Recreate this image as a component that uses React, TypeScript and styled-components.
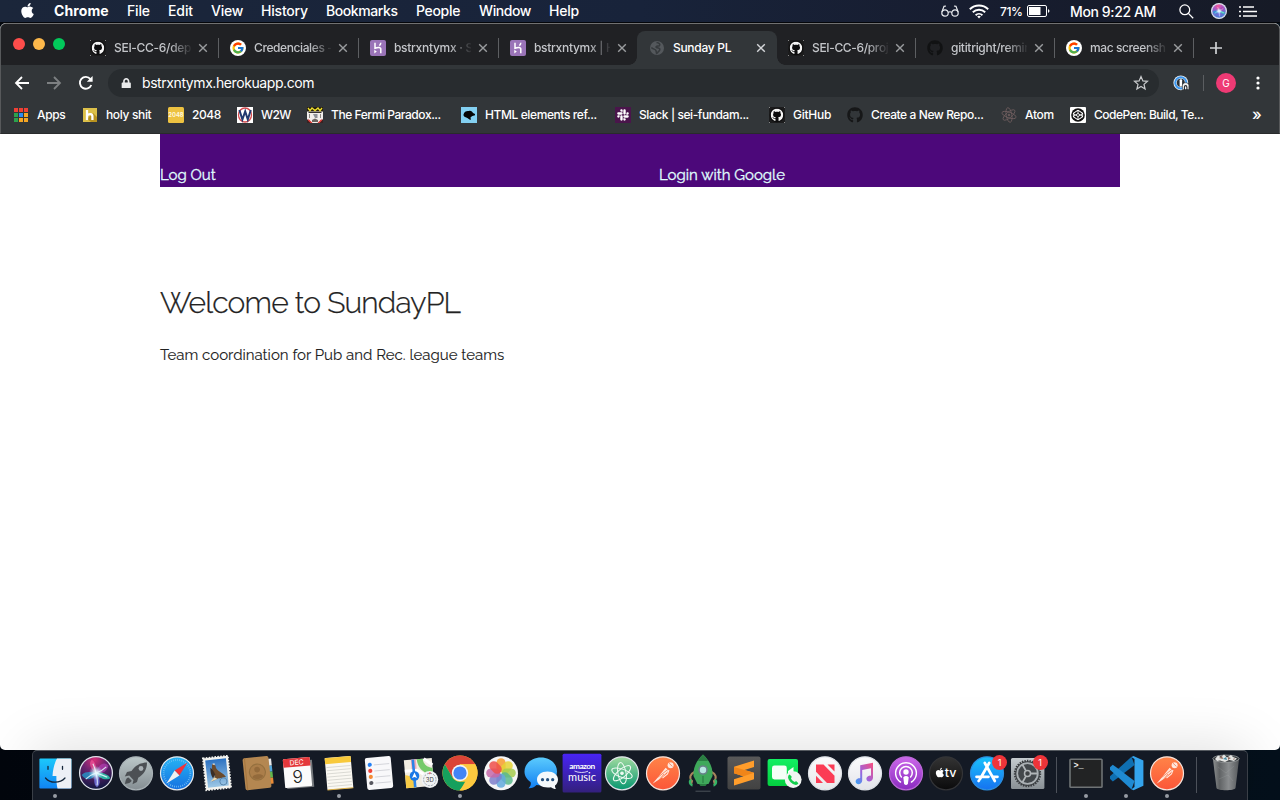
import React from 'react';
import styled, { createGlobalStyle, css } from 'styled-components';
import { FaApple, FaGithub, FaSlack, FaCodepen, FaLock } from 'react-icons/fa';
import { FcGoogle } from 'react-icons/fc';

const Global = createGlobalStyle`
  *, *::before, *::after { box-sizing: border-box; }
  html, body { margin: 0; padding: 0; overflow: hidden; background: #03070f; }
  svg { display: block; flex: none; }
`;

const UI = `Inter, "Liberation Sans", sans-serif`;
const PAGE = `Raleway, Lato, "Open Sans", sans-serif`;

const Desktop = styled.div`
  width: 1280px;
  height: 800px;
  display: flex;
  flex-direction: column;
  overflow: hidden;
  font-family: ${UI};
  background: linear-gradient(90deg, #02060d 0%, #050b15 50%, #04101b 100%);
`;

/* ---------- menu bar ---------- */
const MenuBar = styled.header`
  height: 23px;
  flex: none;
  display: flex;
  align-items: center;
  padding: 0 23px 0 19px;
  background: linear-gradient(90deg, #1b263a 0%, #18233a 50%, #171d30 75%, #161a26 100%);
  border-bottom: 1px solid #04060a;
  color: #fff;
`;
const MenuApple = styled.div`
  width: 35px;
  display: flex;
  padding-bottom: 1px;
`;
const MenuItem = styled.span<{ $w: number; $strong?: boolean; $ls: number }>`
  width: ${p => p.$w}px;
  flex: none;
  white-space: nowrap;
  font-size: 14px;
  line-height: 22px;
  font-weight: ${p => (p.$strong ? 700 : 500)};
  letter-spacing: ${p => p.$ls}px;
`;
const MenuStatus = styled.div`
  margin-left: auto;
  display: flex;
  align-items: center;
`;
const StatusText = styled.span<{ $w: number; $size: number; $ls: number }>`
  width: ${p => p.$w}px;
  white-space: nowrap;
  font-size: ${p => p.$size}px;
  font-weight: 500;
  letter-spacing: ${p => p.$ls}px;
`;
const StatusIcon = styled.div<{ $w: number }>`
  width: ${p => p.$w}px;
  display: flex;
`;

/* ---------- browser window ---------- */
const Window = styled.main`
  height: 727px;
  flex: none;
  display: flex;
  flex-direction: column;
  overflow: hidden;
  border-radius: 6px 6px 5px 5px;
  background: #fff;
`;
const Chrome = styled.div`
  height: 111px;
  flex: none;
  display: flex;
  flex-direction: column;
  background: #323639;
  border-radius: 6px 6px 0 0;
  border: 1px solid #57595b;
  border-top-color: #717171;
  border-bottom-color: #292b2c;
`;
const TabStrip = styled.div`
  height: 41px;
  flex: none;
  display: flex;
  align-items: flex-end;
  background: #202124;
  border-radius: 5px 5px 0 0;
`;
const Lights = styled.div`
  width: 78px;
  height: 41px;
  display: flex;
  gap: 8px;
  padding: 14px 0 0 12px;
`;
const Light = styled.i<{ $c: string }>`
  width: 12px;
  height: 12px;
  border-radius: 50%;
  background: ${p => p.$c};
`;
const Tab = styled.div<{ $w: number; $active?: boolean; $line?: boolean }>`
  position: relative;
  width: ${p => p.$w}px;
  height: 34px;
  flex: none;
  display: flex;
  align-items: center;
  padding-left: ${p => (p.$active ? 12 : 11)}px;
  border-radius: 8px 8px 0 0;
  color: ${p => (p.$active ? '#fff' : '#c3c5c9')};
  background: ${p => (p.$active ? '#323639' : 'transparent')};
  ${p => p.$line && css`
    &::after {
      content: '';
      position: absolute;
      right: 0;
      top: 7px;
      width: 1px;
      height: 20px;
      background: #5d5f62;
    }
  `}
  ${p => p.$active && css`
    &::before, &::after {
      content: '';
      position: absolute;
      bottom: 0;
      width: 8px;
      height: 8px;
    }
    &::before { left: -8px; background: radial-gradient(circle at 0 0, transparent 7.5px, #323639 8px); }
    &::after { right: -8px; background: radial-gradient(circle at 100% 0, transparent 7.5px, #323639 8px); }
  `}
`;
const Favicon = styled.span`
  width: 16px;
  height: 16px;
  margin-right: 8px;
  flex: none;
  display: flex;
  align-items: center;
  justify-content: center;
`;
const TabTitle = styled.span<{ $w: number; $ls: number; $fade?: boolean }>`
  width: ${p => p.$w}px;
  margin-right: 7px;
  white-space: nowrap;
  font-size: 12px;
  font-weight: 450;
  line-height: 18px;
  letter-spacing: ${p => p.$ls}px;
  ${p => p.$fade && css`
    mask-image: linear-gradient(90deg, #000 72%, rgba(0, 0, 0, 0.08) 100%);
  `}
`;
const Toolbar = styled.div`
  height: 36px;
  flex: none;
  display: flex;
  align-items: center;
  padding-left: 13px;
`;
const NavIcon = styled.div<{ $w: number }>`
  width: ${p => p.$w}px;
  flex: none;
  display: flex;
`;
const AddressBar = styled.div`
  width: 1051px;
  height: 28px;
  flex: none;
  display: flex;
  align-items: center;
  padding: 0 10px 0 13px;
  border-radius: 14px;
  background: #282c2f;
  color: #fff;
  font-size: 14px;
  font-weight: 400;
  letter-spacing: -0.42px;
`;
const Url = styled.span`
  flex: 1;
  margin-left: 10.5px;
  padding-bottom: 1px;
`;
const ToolDivider = styled.i`
  width: 1px;
  height: 16px;
  background: #5b5e61;
`;
const Avatar = styled.div`
  width: 20px;
  height: 20px;
  margin: 0 20px 0 12px;
  border-radius: 50%;
  background: #ee3a74;
  color: #fff;
  font-size: 10px;
  line-height: 20px;
  text-align: center;
`;
const Bookmarks = styled.nav`
  height: 32px;
  flex: none;
  display: flex;
  align-items: center;
  padding: 0 0 4px 12px;
  color: #fff;
  font-size: 12px;
  font-weight: 450;
`;
const Bookmark = styled.div<{ $w: number }>`
  width: ${p => p.$w}px;
  flex: none;
  display: flex;
  align-items: center;
  white-space: nowrap;
`;
const BookmarkLabel = styled.span<{ $ls: number }>`
  padding-bottom: 2px;
  letter-spacing: ${p => p.$ls}px;
`;
const More = styled.span`
  margin-left: 24px;
  font-size: 16px;
  line-height: 16px;
  padding-bottom: 3px;
`;

/* ---------- web page ---------- */
const Page = styled.section`
  flex: 1;
  width: 960px;
  margin: 0 auto;
  font-family: ${PAGE};
  color: #222;
`;
const SiteNav = styled.div`
  height: 53px;
  display: flex;
  align-items: flex-end;
  background: #4c087a;
  color: #e0ffff;
  font-size: 15px;
  line-height: 24px;
`;
const SiteLink = styled.a<{ $w: number }>`
  width: ${p => p.$w}px;
  -webkit-text-stroke: 0.3px #e0ffff;
`;
const Heading = styled.h1`
  margin: 96px 0 0;
  font-size: 30px;
  font-weight: 300;
  line-height: 40px;
  letter-spacing: -0.8px;
  -webkit-text-stroke: 0.25px #222;
`;
const Lead = styled.p`
  margin: 20px 0 0;
  font-size: 15px;
  line-height: 24px;
  -webkit-text-stroke: 0.1px #222;
`;

/* ---------- dock ---------- */
const DockArea = styled.footer`
  position: relative;
  height: 50px;
  flex: none;
  display: flex;
  padding-left: 32px;
`;
const Dock = styled.div`
  width: 1216px;
  height: 50px;
  display: flex;
  padding: 2px 0 0 2px;
  background: #141a25;
  border: 1px solid #3a3f47;
  border-top-color: #555a60;
  border-bottom: 0;
  border-radius: 5px 5px 0 0;
  box-shadow: 0 0 56px rgba(0, 0, 0, 0.15);
`;
const DockCell = styled.div`
  position: relative;
  width: 40.5px;
  height: 46px;
  flex: none;
  display: flex;
  flex-direction: column;
  align-items: center;
`;
const Running = styled.i`
  width: 4px;
  height: 4px;
  margin-top: 1px;
  border-radius: 50%;
  background: #979ba3;
`;
const DockSeparator = styled.i`
  width: 1px;
  height: 36px;
  margin: 4px 8.6px 0;
  flex: none;
  background: #4c515a;
`;
const Badge = styled.b`
  position: absolute;
  top: 1.5px;
  right: 0;
  width: 15px;
  height: 15px;
  border-radius: 50%;
  background: #ee3439;
  color: #fff;
  font-size: 9px;
  font-weight: 400;
  line-height: 15px;
  text-align: center;
`;

/* ---------- small drawings ---------- */
const GithubBox = () => (
  <svg width="16" height="16" viewBox="0 0 16 16">
    <rect width="16" height="16" fill="#1b1b1c" />
    <path d="M0 1V0H1M15 0H16V1M16 15V16H15M1 16H0V15" stroke="#aaa" fill="none" />
    <circle cx="8" cy="8" r="7.3" fill="#0c0c0d" />
    <g transform="translate(1.6 1.6)"><FaGithub size={12.8} color="#f4f4f4" /></g>
  </svg>
);
const HerokuIcon = () => (
  <svg width="16" height="16" viewBox="0 0 16 16">
    <rect width="16" height="16" rx="2" fill="#9a74b8" />
    <path d="M5 2.8V8.2C7.4 7.2 10.8 6.8 10.8 9V13.2M10.8 2.8C10.8 4 10.2 4.9 9.4 5.6" fill="none" stroke="#fff" strokeWidth="1.5" />
    <path d="M4.3 9.8L6.8 11.6L4.3 13.4Z" fill="#fff" />
  </svg>
);
const GoogleIcon = () => (
  <svg width="16" height="16" viewBox="0 0 16 16">
    <circle cx="8" cy="8" r="8" fill="#fff" />
    <g transform="translate(1.4 1.4)"><FcGoogle size={13.2} /></g>
  </svg>
);
const GlobeIcon = () => (
  <svg width="14" height="14" viewBox="0 0 14 14">
    <circle cx="7" cy="7" r="7" fill="#54585c" />
    <path d="M6.5 1.6C9 2 10.4 3 9.6 4.4C8.6 5.6 7.2 4.6 6.2 5.6C5.6 6.6 7.4 6.8 9 7.2C10.6 7.8 9.8 9.6 8.4 10.6C7.6 11.4 7.4 12.2 6.6 12.4C6 11 6.6 9.8 5.4 8.8C4 8 2.4 7.6 1.4 6.4" fill="none" stroke="#363a3d" strokeWidth="1.5" />
  </svg>
);
const CloseIcon = ({ active }: { active?: boolean }) => (
  <svg width="10" height="10" viewBox="0 0 10 10">
    <path d="M1.2 1.2L8.8 8.8M8.8 1.2L1.2 8.8" stroke={active ? '#d4d6d9' : '#9a9c9f'} strokeWidth="1.4" />
  </svg>
);
const AppsIcon = () => {
  const colors = ['#ee4035', '#ee4035', '#ee4035', '#2ba24c', '#2c8cf4', '#f5a623', '#2ba24c', '#f5a623', '#f5a623'];
  return (
    <svg width="14" height="14" viewBox="0 0 14 14">
      {colors.map((c, i) => <rect key={i} x={(i % 3) * 5} y={Math.floor(i / 3) * 5} width="4" height="4" fill={c} />)}
    </svg>
  );
};
const HolyIcon = () => (
  <svg width="14" height="14" viewBox="0 0 14 14">
    <rect width="14" height="14" fill="#dcc04a" />
    <path d="M10 5L14 9V14H8L4 11Z" fill="#b8921f" />
    <path d="M4 2V12M4 7.4C6 5.4 9.4 5.8 9.4 8.2V12" stroke="#fff" strokeWidth="2.3" fill="none" />
  </svg>
);
const TwoIcon = () => (
  <svg width="16" height="16" viewBox="0 0 16 16">
    <rect width="16" height="16" rx="1.5" fill="#edc241" />
    <text x="8" y="10.3" fontSize="5.8" fontWeight="700" fill="#fff7dc" textAnchor="middle" fontFamily="Inter, sans-serif">2048</text>
  </svg>
);
const W2WIcon = () => (
  <svg width="16" height="16" viewBox="0 0 16 16">
    <rect width="16" height="16" fill="#fff" />
    <ellipse cx="8" cy="8" rx="6.5" ry="7" fill="none" stroke="#d6494c" strokeWidth="1.3" />
    <path d="M2.4 3L5.4 12.5L8.2 4.5L10.8 12.5L13.8 3" fill="none" stroke="#22386f" strokeWidth="2" />
  </svg>
);
const FermiIcon = () => (
  <svg width="16" height="16" viewBox="0 0 16 16">
    <rect width="16" height="16" fill="#f1efec" />
    <path d="M0 0H16V4.6H0Z" fill="#272010" />
    <path d="M1 1L3 3.6L5 1L8 3.6L11 1L13 3.6L15 1" stroke="#efe02e" strokeWidth="1.3" fill="none" />
    <path d="M1.5 5.5H14.5" stroke="#34302d" strokeWidth="1" />
    <path d="M2.5 7V11M13.5 7V11" stroke="#8a8580" strokeWidth="1" />
    <path d="M5 13L8 11.4L11 13V15H5Z" fill="#6b6560" />
    <path d="M6 7H10.5V11H8Z" fill="#8d9298" />
    <path d="M0 12L4 16H0ZM16 12L12 16H16Z" fill="#3a2222" /><path d="M1.5 12L5.5 16H3.5L1 13.5ZM14.5 12L10.5 16H12.5L15 13.5Z" fill="#dc2e2c" />
  </svg>
);
const MdnIcon = () => (
  <svg width="16" height="16" viewBox="0 0 16 16">
    <rect width="16" height="16" fill="#83d0f2" />
    <path d="M2.5 7.5C3 4.5 6 3.5 8 4C9.5 3.2 11.5 4.5 12 6L14 7V8.2L11.4 9L9.6 10.2L9.8 13C7.8 12.4 7 10.8 5.2 10.4C3.6 10.2 2.4 9.2 2.5 7.5Z" fill="#050505" />
  </svg>
);
const SlackIcon = () => (
  <svg width="16" height="16" viewBox="0 0 16 16">
    <rect width="16" height="16" fill="#4a154b" />
    <g transform="translate(1.4 1.4)"><FaSlack size={13.2} color="#fff" /></g>
  </svg>
);
const AtomLines = ({ c, w = 0.9 }: { c: string; w?: number }) => (
  <g fill="none" stroke={c} strokeWidth={w}>
    <ellipse cx="8" cy="8" rx="2.8" ry="7.4" transform="rotate(-10 8 8)" />
    <ellipse cx="8" cy="8" rx="2.8" ry="7.4" transform="rotate(50 8 8)" />
    <ellipse cx="8" cy="8" rx="2.8" ry="7.4" transform="rotate(110 8 8)" />
    <circle cx="8" cy="8" r="0.9" fill={c} />
  </g>
);
const AtomIcon = () => <svg width="16" height="16" viewBox="0 0 16 16"><AtomLines c="#6c5c5d" /></svg>;
const CodepenIcon = () => (
  <svg width="16" height="16" viewBox="0 0 16 16">
    <rect width="16" height="16" rx="1" fill="#fff" />
    <circle cx="8" cy="8" r="6.8" fill="#111" />
    <g transform="translate(2.7 2.7)"><FaCodepen size={10.6} color="#fff" /></g>
  </svg>
);
const SiriOrb = ({ id, r, light }: { id: string; r: number; light?: boolean }) => (
  <g>
    <defs>
      <radialGradient id={`${id}a`} cx="45%" cy="10%" r="90%">
        <stop offset="0" stopColor={light ? '#f0569c' : '#d52f78'} />
        <stop offset=".4" stopColor={light ? '#a45ac8' : '#6d2370'} />
        <stop offset="1" stopColor={light ? '#3f7fd8' : '#0d1740'} />
      </radialGradient>
      <radialGradient id={`${id}b`}>
        <stop offset="0" stopColor="#fff" /><stop offset=".4" stopColor="#d9f6ff" stopOpacity=".75" /><stop offset="1" stopColor="#aef" stopOpacity="0" />
      </radialGradient>
    </defs>
    <circle cx="20" cy="20" r={r} fill={`url(#${id}a)`} stroke="#dfe2ea" strokeWidth="1.3" />
    <g transform={`translate(20 20) scale(${r / 16})`}>
      <path d="M-14 2C-9 -3 -3 0 0 0C-2 6 -9 9 -14 2Z" fill="#1ea8d8" opacity=".7" />
      <path d="M0 0C2 -8 8 -12 12 -7C11 -1 5 1 0 0Z" fill="#b23fb4" opacity=".7" />
      <path d="M0 0C-5 -4 -8 -9 -4 -13C0 -10 1 -5 0 0Z" fill="#f2569a" opacity=".7" />
      <path d="M0 0C5 -1 12 1 14 5C9 8 3 5 0 0Z" fill="#28d4b4" opacity=".8" />
      <path d="M0 0C4 5 5 11 1 14C-3 11 -2 4 0 0Z" fill="#7b7ff0" opacity=".75" />
      <circle r="7" fill={`url(#${id}b)`} />
      <path d="M-10 6C-6 2 -3 1 0 0C-1 -4 -2 -7 -3 -9M0 0C3 -1 7 -3 10 -6M0 0C4 1 8 3 11 4M0 0C1 4 2 8 1 12" fill="none" stroke="#e9fbff" strokeWidth="1.1" opacity=".85" />
    </g>
  </g>
);

/* ---------- dock icons, each on a 40 x 40 canvas ---------- */
const Icon = ({ children }: { children: React.ReactNode }) => (
  <svg width="40" height="40" viewBox="0 0 40 40">{children}</svg>
);
const Grad = ({ id, a, b }: { id: string; a: string; b: string }) => (
  <defs><linearGradient id={id} x1="0" y1="0" x2="0" y2="1"><stop offset="0" stopColor={a} /><stop offset="1" stopColor={b} /></linearGradient></defs>
);
const Disc = ({ id, a, b, edge = '#dfe3e8' }: { id: string; a: string; b: string; edge?: string }) => (
  <><Grad id={id} a={a} b={b} /><circle cx="20" cy="20.3" r="16.5" fill={`url(#${id})`} stroke={edge} strokeWidth="1.2" /></>
);

const Finder = () => (
  <Icon>
    <Grad id="fi" a="#1cc8fb" b="#1184f4" />
    <rect x="4.4" y="5.6" width="32" height="30" rx="1" fill="url(#fi)" />
    <path d="M22 5.6H35.4Q36.4 5.6 36.4 6.6V34.6Q36.4 35.6 35.4 35.6H22.5C21.5 31 21.3 27 21.4 23H17.5C18 16 19.5 10 22 5.6Z" fill="#edf0f6" />
    <path d="M13 13.3V16.3M27.5 13.3V16.3" stroke="#16263a" strokeWidth="1.3" strokeLinecap="round" />
    <path d="M10.5 25C15 30.6 25 30.6 30 25" stroke="#16263a" strokeWidth="1.2" fill="none" strokeLinecap="round" />
  </Icon>
);
const Siri = () => <Icon><SiriOrb id="si" r={16.4} /></Icon>;
const Launchpad = () => (
  <Icon>
    <Disc id="la" a="#bcc8c9" b="#858e93" edge="#a9b2b6" />
    <path d="M31 9.5C24 9.5 19 13 15.5 18L11 19L8.8 23.5L13.2 22.5L17.5 27L16.5 31.2L21 29L22.2 24.8C27.5 21.5 31 17 31 9.5Z" fill="#4c5054" />
    <circle cx="25" cy="15.5" r="2.4" fill="#a8b0b4" />
    <path d="M12.5 24.5C9.8 25 9.5 28 9 31C12 30.6 15 30.2 15.6 27.6Z" fill="#4c5054" />
  </Icon>
);
const Safari = () => (
  <Icon>
    <Disc id="sa" a="#25b4f5" b="#1670e0" edge="#e6e9ec" />
    <circle cx="20" cy="20.3" r="13.4" fill="none" stroke="#7cc6f6" strokeWidth="1.8" strokeDasharray=".7 1.4" />
    <path d="M30.5 9.5L22.4 22.4L17.6 17.6Z" fill="#f2323a" />
    <path d="M9.5 30.5L22.4 22.4L17.6 17.6Z" fill="#f0eff0" />
  </Icon>
);
const Mail = () => (
  <Icon>
    <Grad id="ma" a="#2c72c2" b="#9cc7e5" />
    <g transform="rotate(-6 20 20)">
      <rect x="7.5" y="4" width="25" height="32" fill="#f3f3ef" stroke="#f3f3ef" strokeDasharray="1.6 1.3" strokeWidth="1.8" />
      <rect x="9.6" y="6.3" width="20.8" height="27.4" fill="url(#ma)" />
      <path d="M16 11C18 10 19.5 12 19.5 15C21 19 27 21 28.5 25C25 24.5 24 26 21 25.5L14 28L17.5 23C15.5 20 15 15 16 11Z" fill="#6b4a2c" />
      <path d="M14 14C16 16 17 18 18 21L15.5 25C13.5 21 13.5 18 14 14Z" fill="#3a2e27" />
      <path d="M17 24L12.5 28L20 26Z" fill="#e9d9b4" />
      <path d="M16 10.5L18.5 10L18.5 12Z" fill="#f4efe4" />
      <circle cx="25.5" cy="29" r="3.6" fill="none" stroke="#507da3" strokeWidth=".8" />
    </g>
  </Icon>
);
const Contacts = () => (
  <Icon>
    <g transform="rotate(-6 20 20)">
      <rect x="30" y="7" width="4.5" height="7" fill="#e9e9e9" /><rect x="30" y="14" width="4.5" height="6" fill="#54a7db" />
      <rect x="30" y="20" width="4.5" height="6" fill="#62b74d" /><rect x="30" y="26" width="4.5" height="6" fill="#e98a35" />
      <rect x="6" y="4" width="26" height="32" rx="2" fill="#b48751" />
      <path d="M8 4V36" stroke="#a5763f" />
      <circle cx="19.5" cy="19" r="8" fill="#ab7e4a" stroke="#94703f" strokeWidth="1.1" />
      <circle cx="19.5" cy="16.5" r="2.9" fill="#936a3b" /><path d="M14 23.6C15.3 20.5 23.7 20.5 25 23.6C22 27 17 27 14 23.6Z" fill="#936a3b" />
    </g>
  </Icon>
);
const Calendar = () => (
  <Icon>
    <g transform="rotate(-5 20 20)">
      <path d="M8 8H35V35H8Z" fill="#767a7e" />
      <rect x="6" y="5" width="27" height="29" rx="1" fill="#fbfbfb" />
      <path d="M6 6Q6 5 7 5H32Q33 5 33 6V13.5H6Z" fill="#e4383b" />
      <text x="19.5" y="11.8" fontSize="7" fill="#fff" textAnchor="middle" fontFamily="Inter, sans-serif">DEC</text>
      <text x="19.5" y="29.8" fontSize="17.5" fontWeight="300" fill="#222" textAnchor="middle" fontFamily="Inter, sans-serif">9</text>
    </g>
  </Icon>
);
const Notes = () => (
  <Icon>
    <g transform="rotate(-5 20 20)">
      <rect x="7" y="4" width="26" height="32" rx=".8" fill="#faf8f2" />
      <path d="M7 4H33V10H7Z" fill="#f8c93a" />
      <path d="M8 13.5H32M8 16.7H32M8 19.9H32M8 23.1H32M8 26.3H32M8 29.5H32M8 32.7H32" stroke="#d3d3cd" strokeWidth=".8" />
      <path d="M7 36H33" stroke="#d8aa3f" />
    </g>
  </Icon>
);
const Reminders = () => (
  <Icon>
    <g transform="rotate(-5 20 20)">
      <rect x="7" y="4" width="26" height="32" rx="2" fill="#f8f8fa" />
      {['#2380f5', '#f14239', '#f48a35', '#57575f'].map((c, i) => (
        <g key={c}><circle cx="11.5" cy={11 + 6.1 * i} r="2.1" fill={c} /><path d={`M15.5 ${11.5 + 6.1 * i}H31`} stroke="#ccced4" strokeWidth=".8" /></g>
      ))}
    </g>
  </Icon>
);
const Maps = () => (
  <Icon>
    <g transform="rotate(-5 20 20)">
      <rect x="5" y="6" width="28" height="28" fill="#f1ede3" />
      <path d="M12 6H17V18L12 22Z" fill="#f1a9b7" />
      <path d="M18 6H24C24 12 28 15 33 16V22C25 22 18 16 18 6Z" fill="#75ca6a" />
      <path d="M5 21C12 22 15 27 15 34H5Z" fill="#f7cb47" />
      <path d="M5 17H17L33 28M25 6L33 13" stroke="#fff" strokeWidth="3" fill="none" />
      <path d="M14 6V34" stroke="#2a83e8" strokeWidth="2.6" />
    </g>
    <circle cx="14.5" cy="23" r="4.8" fill="#1a78e6" /><path d="M14.5 19.5L17 25L14.5 24L12 25Z" fill="#fff" />
    <circle cx="29.8" cy="26.5" r="8.4" fill="#f1f3f5" /><circle cx="29.8" cy="26.5" r="6.2" fill="none" stroke="#9aa3ab" strokeWidth="1" strokeDasharray="2 1.2" />
    <text x="29.8" y="28.7" fontSize="6" textAnchor="middle" fill="#444" fontFamily="Inter, sans-serif">3D</text>
    <path d="M28.8 19.5H30.8L29.8 21.4Z" fill="#e33" />
  </Icon>
);
const ChromeIcon = () => (
  <Icon>
    <circle cx="20" cy="20" r="17.6" fill="#fdc93f" />
    <path d="M20 2.4A17.6 17.6 0 0 1 35.3 11.3H20L12.3 24.3L4.8 11.3A17.6 17.6 0 0 1 20 2.4Z" fill="#db4437" />
    <path d="M4.8 11.3L12.5 24.5C14 27.3 17 28.8 20 28.7H27L19.2 37.6A17.6 17.6 0 0 1 4.8 11.3Z" fill="#16a05d" />
    <path d="M27.6 24.4L20 37.6A17.6 17.6 0 0 0 35.3 11.3H20Z" fill="#fdc93f" />
    <circle cx="20" cy="20" r="8.2" fill="#f3f5f6" /><circle cx="20" cy="20" r="6.6" fill="#4385f5" />
  </Icon>
);
const Photos = () => (
  <Icon>
    <circle cx="20" cy="20.3" r="17" fill="#f5f5f5" />
    {['#f79c2d', '#e5d336', '#a6cb4d', '#5bb88c', '#63a9dc', '#7f7fca', '#c468a9', '#ee4f4a'].map((c, i) => (
      <rect key={c} x="15.4" y="5.2" width="9.2" height="14" rx="4.6" fill={c} opacity=".85" transform={`rotate(${i * 45} 20 20)`} />
    ))}
  </Icon>
);
const Messages = () => (
  <Icon>
    <Grad id="ms" a="#5bcbfd" b="#1280f3" />
    <path d="M20 4.5C29 4.5 36 10.5 36 18.5S29 32.5 20 32.5L15.5 32C13 34.4 10.5 35.5 7.5 35.2C9.7 33 10.3 31 9.5 29C6 26.5 3.5 23 3.5 18.5C3.5 10.5 11 4.5 20 4.5Z" fill="url(#ms)" />
    <path d="M26.5 18.5C32.5 18.5 37 22 37 26.5C37 29 35.8 31.2 34 32.6C33.9 34 34.3 35 35 36C33 36 31.5 35.3 30 34.2C22 35.5 16 32 16 26.5C16 22 20.5 18.5 26.5 18.5Z" fill="#f4f8fb" />
    <g fill="#23507f"><circle cx="21.5" cy="26.7" r="1.6" /><circle cx="26.6" cy="26.7" r="1.6" /><circle cx="31.7" cy="26.7" r="1.6" /></g>
  </Icon>
);
const AmazonMusic = () => (
  <Icon>
    <Grad id="am" a="#4824f6" b="#33207c" />
    <rect x=".6" y=".8" width="38.8" height="38.6" rx="1.5" fill="url(#am)" />
    <text x="20" y="16.2" fontSize="8.3" fontWeight="700" fill="#fff" textAnchor="middle" letterSpacing="-.5" fontFamily="Lato, sans-serif">amazon</text>
    <path d="M12.5 18C17 20 22 20 26 18.2" stroke="#fff" strokeWidth=".8" fill="none" />
    <text x="20" y="28.3" fontSize="11" fill="#fff" textAnchor="middle" fontFamily="Lato, sans-serif">music</text>
  </Icon>
);
const AtomApp = () => (
  <Icon>
    <Disc id="at" a="#a1dba0" b="#089770" />
    <g transform="translate(8.4 8.6) scale(1.45)"><AtomLines c="#effaf3" w={0.7} /></g>
  </Icon>
);
const Postman = ({ id }: { id: string }) => (
  <Icon>
    <Disc id={id} a="#ff8448" b="#fc5638" edge="#f7e3da" />
    <circle cx="27.6" cy="12.2" r="3" fill="#ffe7dc" />
    <path d="M9.5 30.8L15 24.2L22.6 14.8L25.8 17.4L17.6 25.6Z" fill="#ffe7dc" />
    <path d="M14.5 24.5L25.5 16M16 27L21 21M26 10.2L29.4 13.4" stroke="#f27850" strokeWidth=".8" fill="none" />
    <path d="M19.5 25L24.5 21L26 17" stroke="#ffe7dc" strokeWidth="1.1" fill="none" />
  </Icon>
);
const Rocket = () => (
  <Icon>
    <path d="M11.5 19C7 21 6 25 9 28L8 32M28.5 19C33 21 34 25 31 28L32 32" stroke="#a7845c" strokeWidth="2" fill="none" />
    <path d="M8 26.5C6 28.5 7 32 9.5 32.5M32 26.5C34 28.5 33 32 30.5 32.5" stroke="#35b567" strokeWidth="2.4" fill="none" />
    <path d="M20 1.5C27 8 30 15 29.5 23L25.5 31H14.5L10.5 23C10 15 13 8 20 1.5Z" fill="#3fa85b" />
    <path d="M20 1.5C22 3.5 24 6 25 8H15C16 6 18 3.5 20 1.5ZM16 31H24L22.5 33H17.5Z" fill="#2b7e43" />
    <circle cx="20" cy="17" r="4.8" fill="#68828a" /><circle cx="20" cy="17" r="3.2" fill="#b9e7e3" />
    <path d="M20 23V30" stroke="#2b7e43" strokeWidth="1.2" />
    <path d="M12.5 38.2H27.5" stroke="#4c535a" strokeWidth="1" />
  </Icon>
);
const Sublime = () => (
  <Icon>
    <Grad id="su" a="#595959" b="#424242" />
    <rect x="3.5" y="3.5" width="33" height="33" rx="2" fill="url(#su)" />
    <path d="M30 7.5L10 13.8V20.2L19.5 23.2L10 26.2V32.6L30 26.2V19.8L20.5 16.9L30 13.9Z" fill="#ff9d2b" />
    <path d="M10 20.2L19.5 23.2L30 19.8L20.5 16.9L10 13.9Z" fill="#f08519" />
  </Icon>
);
const FaceTime = () => (
  <Icon>
    <Grad id="ft" a="#12ef62" b="#04cf40" />
    <rect x="3.6" y="6" width="30.4" height="27" rx="2" fill="url(#ft)" />
    <rect x="8" y="12.5" width="14.8" height="14" rx="2.4" fill="#f4fff7" /><path d="M24 18L29.5 14V25.5L24 22Z" fill="#f4fff7" />
    <circle cx="29.2" cy="26.6" r="8.4" fill="#f1f4f2" />
    <path d="M25.6 21.6L27.6 23.6Q28 24.4 27 25.2C27.6 27 29 28.3 30.8 28.9Q31.6 27.9 32.4 28.3L34.4 30.2Q33.6 32 31.8 31.9C27.6 31 24.8 28 24 24.2Q24 22.3 25.6 21.6Z" fill="#12ce4c" />
  </Icon>
);
const News = () => (
  <Icon>
    <Disc id="ne" a="#fbfbfc" b="#e7e7ea" />
    <path d="M11 11.5H18.5L29.5 22.8V30H22L11 18.7Z" fill="#fb3c55" />
    <path d="M22.5 11.5H29.5V18.6ZM11 22.8L18 30H11Z" fill="#fb3c55" />
  </Icon>
);
const Music = () => (
  <Icon>
    <Disc id="mu" a="#fcfcfd" b="#e3e4ea" />
    <defs><linearGradient id="mug" x1="1" y1="0" x2="0" y2="1"><stop offset="0" stopColor="#fb4e7c" /><stop offset=".55" stopColor="#9d62dc" /><stop offset="1" stopColor="#35a6f6" /></linearGradient></defs>
    <path d="M15.2 12.3L28 9.7V24.8C28 28.5 22.3 30 21.5 26.6C20.8 23.5 24 22.8 26 22.5V15.2L17.2 17V27.5C17.2 31.5 11.2 32.5 10.7 29C10.4 26 13.3 25.4 15.2 25.1Z" fill="url(#mug)" />
  </Icon>
);
const Podcasts = () => (
  <Icon>
    <Disc id="po" a="#cc68ea" b="#8a2bc0" edge="#bb68d8" />
    <g fill="none" stroke="#fff" strokeWidth="1.5" strokeLinecap="round">
      <path d="M14.5 29A10.4 10.4 0 1 1 25.5 29" /><path d="M15.4 24A6.3 6.3 0 1 1 24.6 24" />
    </g>
    <circle cx="20" cy="19" r="2.7" fill="#fff" /><path d="M17.3 24.2Q20 21.8 22.7 24.2L21.9 31Q20 33.2 18.1 31Z" fill="#fff" />
  </Icon>
);
const AppleTv = () => (
  <Icon>
    <Disc id="tv" a="#343434" b="#0a0a0b" edge="#333437" />
    <g transform="translate(8.4 14)"><FaApple size={11} color="#fff" /></g>
    <text x="18.8" y="24.4" fontSize="12.5" fontWeight="500" fill="#fff" fontFamily="Inter, sans-serif">tv</text>
  </Icon>
);
const AppStore = () => (
  <Icon>
    <Disc id="as" a="#1ac3fc" b="#1672f1" edge="#2b8fe0" />
    <g stroke="#fff" strokeWidth="2.7" strokeLinecap="round" fill="none"><path d="M22.2 10L13 26M17.8 10L27.8 28M9.5 23.8H21.5M26.5 23.8H30.5M11.6 28L12 27.4" /></g>
  </Icon>
);
const Settings = () => (
  <Icon>
    <Grad id="se" a="#c4cbcf" b="#899095" />
    <rect x="4" y="5" width="33.4" height="31" rx="1.5" fill="url(#se)" />
    <circle cx="20.5" cy="20.5" r="12.4" fill="#42474b" stroke="#3a3d40" strokeWidth="2.6" strokeDasharray="1.4 1.1" />
    <circle cx="20.5" cy="20.5" r="10.3" fill="none" stroke="#a9afb3" strokeWidth="1.8" />
    <circle cx="20.5" cy="20.5" r="3" fill="#3e4245" stroke="#b0b5b8" strokeWidth="1.5" />
    <path d="M23.5 20.5H30.5M19 17.9L15.5 11.8M19 23.1L15.5 29.2" stroke="#b0b5b8" strokeWidth="1.8" />
  </Icon>
);
const Terminal = () => (
  <Icon>
    <rect x="3.2" y="5.5" width="33.6" height="29.5" rx="1.6" fill="#6f7375" /><rect x="4.8" y="7" width="30.4" height="26.5" fill="#222324" />
    <text x="7.5" y="15" fontSize="8.5" fontWeight="700" fill="#ecefed" fontFamily="Liberation Mono, monospace">&gt;_</text>
  </Icon>
);
const VsCode = () => (
  <Icon>
    <path d="M4 25.8V23.2L25.5 3.8L28.5 12L12.3 24.4L6.8 28.4Z" fill="#0f6fb2" />
    <path d="M28.5 28L12 15.6L6.8 11.8L4 14.2V16.8L25.5 36.4Z" fill="#1f8ad2" />
    <path d="M27.5 3L37.4 7.4V32.8L27.5 37.2L25.4 36.2L28.5 34V6L25.4 4Z" fill="#34a4ed" />
  </Icon>
);
const Trash = () => (
  <Icon>
    <defs><linearGradient id="tr" x1="0" x2="1"><stop offset="0" stopColor="#8e9192" /><stop offset=".25" stopColor="#5f6264" /><stop offset=".6" stopColor="#8a8d8f" /><stop offset="1" stopColor="#55585b" /></linearGradient></defs>
    <path d="M6.8 5H33.2L29.5 35C29 38 11 38 10.5 35Z" fill="url(#tr)" />
    <ellipse cx="20" cy="5.7" rx="13.2" ry="3.6" fill="#33373a" stroke="#a1a5a6" strokeWidth=".8" />
    <path d="M9 6L12 2.5L15 4L18 1.5L21 4.5L25 2L27 4L31 5.5L28 8L23 7L19 9L14 7.5L11 8Z" fill="#e5e6e4" />
    <path d="M13 5L16 3L17 6ZM22 4L25 5L22 7ZM27 6L29 5L28 7Z" fill="#8f6a5e" /><path d="M17 6L20 4L21 7Z" fill="#498ca5" />
    <path d="M12 14L20 20L28 13M13 26L22 22L27 28" stroke="#b4b7b9" strokeWidth=".7" opacity=".25" fill="none" />
  </Icon>
);

/* ---------- data ---------- */
const menus: [string, number, number][] = [
  ['File', 41, -0.2], ['Edit', 43, -0.1], ['View', 50, -0.25], ['History', 65, -0.2],
  ['Bookmarks', 90, -0.42], ['People', 63, -0.32], ['Window', 70, -0.4], ['Help', 40, -0.25],
];

type TabData = { icon: React.ReactNode; title: string; w: number; tw: number; ls: number; active?: boolean; line?: boolean; fade?: boolean };
const tabs: TabData[] = [
  { icon: <GithubBox />, title: 'SEI-CC-6/dep', w: 140, tw: 77, ls: -0.3, line: true, fade: true },
  { icon: <GoogleIcon />, title: 'Credenciales -', w: 140, tw: 77, ls: -0.4, line: true, fade: true },
  { icon: <HerokuIcon />, title: 'bstrxntymx · S', w: 140, tw: 77, ls: -0.3, line: true, fade: true },
  { icon: <HerokuIcon />, title: 'bstrxntymx | H', w: 138, tw: 76, ls: -0.3, fade: true },
  { icon: <GlobeIcon />, title: 'Sunday PL', w: 140, tw: 76, ls: -0.3, active: true },
  { icon: <GithubBox />, title: 'SEI-CC-6/proj', w: 139, tw: 76, ls: -0.35, line: true, fade: true },
  { icon: <FaGithub size={16} color="#111213" />, title: 'gititright/remin', w: 139, tw: 76, ls: -0.3, line: true, fade: true },
  { icon: <GoogleIcon />, title: 'mac screensh', w: 139, tw: 76, ls: -0.4, line: true, fade: true },
];

const bookmarks: { icon: React.ReactNode; title: string; w: number; ls: number }[] = [
  { icon: <AppsIcon />, title: 'Apps', w: 69, ls: -0.35 },
  { icon: <HolyIcon />, title: 'holy shit', w: 86, ls: -0.35 },
  { icon: <TwoIcon />, title: '2048', w: 69, ls: -0.4 },
  { icon: <W2WIcon />, title: 'W2W', w: 70, ls: -0.6 },
  { icon: <FermiIcon />, title: 'The Fermi Paradox...', w: 154, ls: -0.44 },
  { icon: <MdnIcon />, title: 'HTML elements ref...', w: 154, ls: -0.4 },
  { icon: <SlackIcon />, title: 'Slack | sei-fundam...', w: 154, ls: -0.42 },
  { icon: <GithubBox />, title: 'GitHub', w: 78, ls: -0.24 },
  { icon: <FaGithub size={16} color="#161718" />, title: 'Create a New Repo...', w: 154, ls: -0.41 },
  { icon: <AtomIcon />, title: 'Atom', w: 69, ls: -0.3 },
  { icon: <CodepenIcon />, title: 'CodePen: Build, Te...', w: 158, ls: -0.48 },
];

const apps: { icon: React.ReactNode; running?: boolean; badge?: string }[] = [
  { icon: <Finder />, running: true }, { icon: <Siri /> }, { icon: <Launchpad /> }, { icon: <Safari /> },
  { icon: <Mail /> }, { icon: <Contacts /> }, { icon: <Calendar /> }, { icon: <Notes />, running: true },
  { icon: <Reminders /> }, { icon: <Maps /> }, { icon: <ChromeIcon />, running: true }, { icon: <Photos /> },
  { icon: <Messages /> }, { icon: <AmazonMusic /> }, { icon: <AtomApp /> }, { icon: <Postman id="p1" /> },
  { icon: <Rocket /> }, { icon: <Sublime /> }, { icon: <FaceTime /> }, { icon: <News /> }, { icon: <Music /> },
  { icon: <Podcasts /> }, { icon: <AppleTv /> }, { icon: <AppStore />, badge: '1' }, { icon: <Settings />, badge: '1' },
];
const openApps = [
  { icon: <Terminal />, running: true }, { icon: <VsCode />, running: true }, { icon: <Postman id="p2" />, running: true },
];

const DockItem = ({ icon, running, badge }: { icon: React.ReactNode; running?: boolean; badge?: string }) => (
  <DockCell>{icon}{running && <Running />}{badge && <Badge>{badge}</Badge>}</DockCell>
);

export default function App() {
  return (
    <Desktop>
      <Global />
      <MenuBar>
        <MenuApple><FaApple size={17} /></MenuApple>
        <MenuItem $w={73} $strong $ls={0.1}>Chrome</MenuItem>
        {menus.map(([label, w, ls]) => <MenuItem key={label} $w={w} $ls={ls}>{label}</MenuItem>)}
        <MenuStatus>
          <StatusIcon $w={28}>
            <svg width="18" height="12" viewBox="0 0 18 12" fill="none" stroke="#e8eaee" strokeWidth="1.2">
              <circle cx="4" cy="8" r="3.2" /><circle cx="14" cy="8" r="3.2" /><path d="M7.2 7.5Q9 6 10.8 7.5M.9 7L3 1.3L5 1M17.1 7L15 1.3L13 1" />
            </svg>
          </StatusIcon>
          <StatusIcon $w={31}>
            <svg width="20" height="15" viewBox="0 0 20 15" fill="none" stroke="#fff" strokeWidth="1.9">
              <path d="M.8 5.2A13.2 13.2 0 0 1 19.2 5.2M3.8 8.3A9 9 0 0 1 16.2 8.3M6.6 11.2A5 5 0 0 1 13.4 11.2" /><path d="M10 14.4L8.2 12.5Q10 11 11.8 12.5Z" fill="#fff" stroke="none" />
            </svg>
          </StatusIcon>
          <StatusText $w={27} $size={12} $ls={-0.4}>71%</StatusText>
          <StatusIcon $w={43}>
            <svg width="23" height="12" viewBox="0 0 23 12">
              <rect x=".5" y=".5" width="19" height="11" rx="1.5" fill="none" stroke="#fff" /><rect x="2" y="2" width="11.5" height="8" fill="#fff" /><path d="M21 4V8Q22.5 7 22.5 6T21 4Z" fill="#fff" />
            </svg>
          </StatusIcon>
          <StatusText $w={109} $size={14} $ls={-0.38}>Mon 9:22 AM</StatusText>
          <StatusIcon $w={32}>
            <svg width="15" height="15" viewBox="0 0 15 15" fill="none" stroke="#fff" strokeWidth="1.3"><circle cx="5.8" cy="5.8" r="4.9" /><path d="M9.4 9.4L14.2 14.2" /></svg>
          </StatusIcon>
          <StatusIcon $w={28}>
            <svg width="16" height="16" viewBox="3 3 34 34"><circle cx="20" cy="20" r="17" fill="#dfe6f2" /><SiriOrb id="sm" r={15} light /></svg>
          </StatusIcon>
          <StatusIcon $w={18}>
            <svg width="18" height="11" viewBox="0 0 18 11" stroke="#fff" strokeWidth="1.7"><path d="M0 1H2M0 5.5H2M0 10H2M4 1H15M4 5.5H18M4 10H18" /></svg>
          </StatusIcon>
        </MenuStatus>
      </MenuBar>

      <Window>
        <Chrome>
          <TabStrip>
            <Lights><Light $c="#fe4d4b" /><Light $c="#fdb84b" /><Light $c="#02c95b" /></Lights>
            {tabs.map((t, i) => (
              <Tab key={i} $w={t.w} $active={t.active} $line={t.line}>
                <Favicon>{t.icon}</Favicon>
                <TabTitle $w={t.tw} $ls={t.ls} $fade={t.fade}>{t.title}</TabTitle>
                <CloseIcon active={t.active} />
              </Tab>
            ))}
            <svg width="44" height="34" viewBox="0 0 44 34"><path d="M16 17H28M22 11V23" stroke="#d0d2d5" strokeWidth="1.7" /></svg>
          </TabStrip>
          <Toolbar>
            <NavIcon $w={32}><svg width="16" height="14" viewBox="0 0 16 14" fill="none" stroke="#fff" strokeWidth="1.8"><path d="M15 7H2.2M8 1L2 7L8 13" /></svg></NavIcon>
            <NavIcon $w={32}><svg width="16" height="14" viewBox="0 0 16 14" fill="none" stroke="#7d8082" strokeWidth="1.8"><path d="M1 7H13.8M8 1L14 7L8 13" /></svg></NavIcon>
            <NavIcon $w={30}><svg width="16" height="16" viewBox="0 0 16 16" fill="none" stroke="#fff" strokeWidth="1.9"><path d="M13.3 10A5.9 5.9 0 1 1 12.4 4.1" /><path d="M14.6 1V6.8H8.8Z" fill="#fff" stroke="none" /></svg></NavIcon>
            <AddressBar>
              <FaLock size={10.5} color="#e9eaeb" />
              <Url>bstrxntymx.herokuapp.com</Url>
              <svg width="16" height="16" viewBox="0 0 16 16" fill="none" stroke="#c8cacc" strokeWidth="1.2"><path d="M8 1.6L9.9 5.9L14.5 6.3L11 9.4L12.1 14L8 11.5L3.9 14L5 9.4L1.5 6.3L6.1 5.9Z" /></svg>
            </AddressBar>
            <NavIcon $w={44}>
              <svg width="44" height="16" viewBox="0 0 44 16">
                <circle cx="21.8" cy="7.8" r="7.4" fill="#e9edf0" />
                <circle cx="21.8" cy="7.8" r="5.6" fill="#e9edf0" stroke="#3d98f0" strokeWidth="2" />
                <circle cx="21.8" cy="7.8" r="4" fill="#2a3036" />
                <rect x="20.6" y="4.2" width="2.5" height="7.4" rx="1" fill="#fff" />
                <path d="M23.4 10.2C23.8 6.8 29.4 6.8 29.9 10.4V14.6H23.4Z" fill="#f2f2f2" stroke="#2a3036" strokeWidth=".6" /><path d="M25.4 15V12.3Q25.4 10.6 26.6 10.6T27.9 12.3V15" stroke="#24272a" strokeWidth="1.1" fill="none" />
              </svg>
            </NavIcon>
            <ToolDivider />
            <Avatar>G</Avatar>
            <svg width="4" height="14" viewBox="0 0 4 14" fill="#fff"><circle cx="2" cy="2" r="1.6" /><circle cx="2" cy="7" r="1.6" /><circle cx="2" cy="12" r="1.6" /></svg>
          </Toolbar>
          <Bookmarks>
            {bookmarks.map(b => (
              <Bookmark key={b.title} $w={b.w}><Favicon>{b.icon}</Favicon><BookmarkLabel $ls={b.ls}>{b.title}</BookmarkLabel></Bookmark>
            ))}
            <More>»</More>
          </Bookmarks>
        </Chrome>
        <Page>
          <SiteNav>
            <SiteLink $w={499}>Log Out</SiteLink>
            <SiteLink $w={200}>Login with Google</SiteLink>
          </SiteNav>
          <Heading>Welcome to SundayPL</Heading>
          <Lead>Team coordination for Pub and Rec. league teams</Lead>
        </Page>
      </Window>

      <DockArea>
        <Dock>
          {apps.map((a, i) => <DockItem key={i} {...a} />)}
          <DockSeparator />
          {openApps.map((a, i) => <DockItem key={i} {...a} />)}
          <DockSeparator />
          <DockItem icon={<Trash />} />
        </Dock>
      </DockArea>
    </Desktop>
  );
}
